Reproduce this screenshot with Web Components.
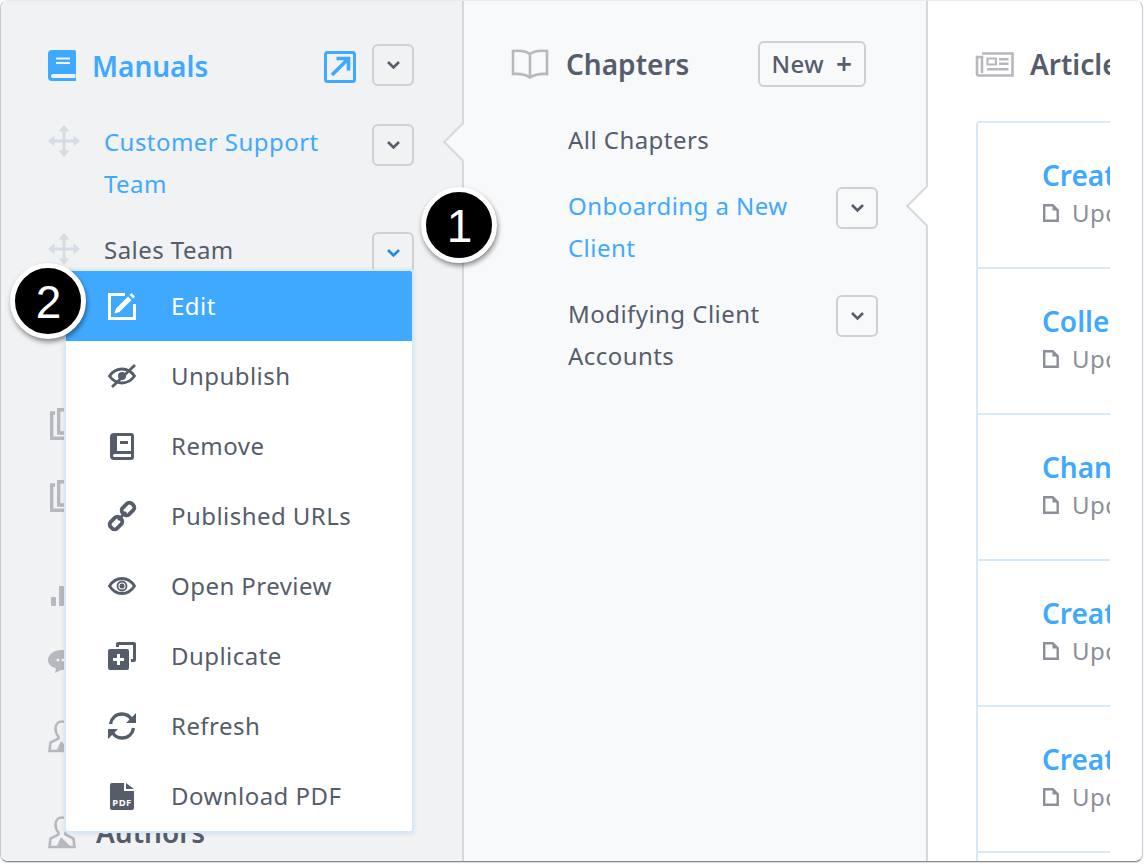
<!doctype html>
<html>
<head>
<meta charset="utf-8">
<title>Manuals</title>
<style>
  html, body { margin: 0; background: #fff; }
  body { font-family: "Noto Sans", "Open Sans", sans-serif; color: #555d6b; }
</style>
</head>
<body>
<app-window>
  <manuals-panel slot="left"></manuals-panel>
  <chapters-panel slot="middle"></chapters-panel>
  <articles-panel slot="right"></articles-panel>
</app-window>

<script>
const ICONS = {
  book: `<svg width="28" height="31" viewBox="0 0 28 31"><path fill="currentColor" d="M4 0h22a2 2 0 0 1 2 2v29H4a4 4 0 0 1-4-4V4a4 4 0 0 1 4-4z"/><path fill="#f0f2f4" d="M8 7.500h14v2H8zM8 12h14v2H8zM5 24h22.500v4H5a2 2 0 0 1 0-4z"/></svg>`,
  external: `<svg width="32" height="32" viewBox="0 0 32 32" fill="none" stroke="currentColor"><rect x="1.500" y="1.500" width="29" height="29" rx="2" stroke-width="3"/><path stroke-width="3.600" d="M8 24 24 8M12.500 7.500h12v12"/></svg>`,
  chevron: `<svg width="13" height="8" viewBox="0 0 13 8" fill="none" stroke="currentColor" stroke-width="2.600"><path d="M1 1l5.500 5.500L12 1"/></svg>`,
  move: `<svg width="32" height="32" viewBox="0 0 32 32" fill="currentColor"><path d="M14.500 5h3v9.500H27v3h-9.500V27h-3v-9.500H5v-3h9.500z"/><path d="M16 0l5.500 6.500h-11zM16 32l-5.500-6.500h11zM0 16l6.500-5.500v11zM32 16l-6.500 5.500v-11z"/></svg>`,
  edit: `<svg width="28" height="28" viewBox="0 0 28 28" fill="none" stroke="currentColor"><path stroke-width="3" d="M17 2.500H1.500v24H26.500V12"/><path fill="currentColor" stroke="none" d="M6.500 21.500l1.500-5L20 4.500l3.500 3.500L11.500 20zM21.500 3l2-2 3.500 3.500-2 2z"/></svg>`,
  eyeslash: `<svg width="28" height="24" viewBox="0 0 28 24" fill="none" stroke="currentColor" stroke-width="2.800"><path d="M1.500 12C5 7 9 5 14 5s9 2 12.500 7C23 17 19 19 14 19S5 17 1.500 12z"/><circle cx="14" cy="12" r="4" fill="currentColor" stroke="none"/><path d="M4 23 27 1"/></svg>`,
  remove: `<svg width="24" height="27" viewBox="0 0 24 27"><path fill="currentColor" fill-rule="evenodd" d="M4 0h17a3 3 0 0 1 3 3v21a3 3 0 0 1-3 3H4a4 4 0 0 1-4-4V4a4 4 0 0 1 4-4zM7 3v15h14V3zM4.500 21a1.500 1.500 0 0 0 0 3H21v-3z"/><path fill="currentColor" d="M10 8h8v3h-8z"/></svg>`,
  link: `<svg width="28" height="28" viewBox="0 0 28 28" fill="none" stroke="currentColor" stroke-width="3.800"><rect x="13.500" y="2.500" width="13" height="9" rx="3.500" transform="rotate(-45 20 7)"/><rect x="1.500" y="16.500" width="13" height="9" rx="3.500" transform="rotate(-45 8 21)"/><path d="M10 18l8-8" stroke-width="3"/></svg>`,
  eye: `<svg width="28" height="18" viewBox="0 0 28 18" fill="none" stroke="currentColor" stroke-width="2.800"><path d="M1.500 9C5 3.500 9 1.500 14 1.500s9 2 12.500 7.500C23 14.500 19 16.500 14 16.500S5 14.500 1.500 9z"/><circle cx="14" cy="9" r="2.500" fill="currentColor" stroke="none"/><circle cx="14" cy="9" r="4.500" stroke-width="1.800"/></svg>`,
  duplicate: `<svg width="28" height="28" viewBox="0 0 28 28"><path fill="currentColor" d="M10 0h16a2 2 0 0 1 2 2v16a2 2 0 0 1-2 2h-3v-3H25V3H11v2H8V2a2 2 0 0 1 2-2z"/><path fill="currentColor" fill-rule="evenodd" d="M2 7h17a2 2 0 0 1 2 2v17a2 2 0 0 1-2 2H2a2 2 0 0 1-2-2V9a2 2 0 0 1 2-2zM9 12v4H5v3h4v4h3v-4h4v-3h-4v-4z"/></svg>`,
  refresh: `<svg width="28" height="28" viewBox="0 0 28 28" fill="none" stroke="currentColor" stroke-width="3.400"><path d="M2.500 12C3.500 6 8 2 14 2c4 0 7.500 2 9.500 5.500"/><path d="M25.500 16C24.500 22 20 26 14 26c-4 0-7.500-2-9.500-5.500"/><path fill="currentColor" stroke="none" d="M28 1v10H18zM0 27V17h10z"/></svg>`,
  pdf: `<svg width="24" height="27" viewBox="0 0 24 27"><path fill="currentColor" d="M2 0h12v8h10v17a2 2 0 0 1-2 2H2a2 2 0 0 1-2-2V2a2 2 0 0 1 2-2zM16 0l8 6h-8z"/><text x="12" y="22.500" text-anchor="middle" font-family="Noto Sans, sans-serif" font-weight="700" font-size="9.500" fill="#fff">PDF</text></svg>`,
  openbook: `<svg width="38" height="30" viewBox="0 0 38 30" fill="none" stroke="currentColor" stroke-width="2.600"><path d="M19 5C15 2 8 1.500 2 2v23c6-.5 12 0 17 3.500 5-3.500 11-4 17-3.500V2c-6-.5-13 0-17 3z"/><path d="M19 5v23"/></svg>`,
  news: `<svg width="38" height="25" viewBox="0 0 38 25"><path fill="none" stroke="currentColor" stroke-width="2.600" d="M6 1.500h30.500v22H3a2 2 0 0 1-2-2V5h5v16"/><path fill="none" stroke="currentColor" stroke-width="2.200" d="M11.500 6.500h8.500v6h-8.500z"/><path fill="currentColor" d="M23 6h9.500v2.500H23zM23 10.500h9.500V13H23zM11 16h21.500v2.500H11z"/></svg>`,
  doc: `<svg width="16" height="18" viewBox="0 0 16 18" fill="none" stroke="currentColor" stroke-width="2.400"><path d="M1.200 1.200h8.500l5 5v10.600H1.200z"/><path d="M9.500 1v5.500H15z" fill="currentColor" stroke="none"/></svg>`,
  copies: `<svg width="32" height="32" viewBox="0 0 32 32" fill="none" stroke="currentColor" stroke-width="3.400"><path d="M5 5H1.700v25.300H22V27"/><path d="M8.700 1.700H30V25H8.700z"/></svg>`,
  bars: `<svg width="32" height="20" viewBox="0 0 32 20" fill="currentColor"><rect x="1" y="11" width="5" height="9" rx="1"/><rect x="9" y="0" width="5" height="20" rx="1"/></svg>`,
  chat: `<svg width="32" height="23" viewBox="0 0 32 23"><path fill="currentColor" d="M14 0c7.500 0 14 4 14 10s-6.500 10-14 10h-1l-6 3 1-4.500C3 17 0 14 0 10 0 4 6.500 0 14 0z"/><circle cx="10" cy="10" r="1.500" fill="#f0f2f4"/><circle cx="15" cy="10" r="1.500" fill="#f0f2f4"/></svg>`,
  user: `<svg width="28" height="32" viewBox="0 0 28 32" fill="none" stroke="currentColor" stroke-width="2.600"><path d="M14 1.500c4 0 6.500 3 6.500 7 0 3-1 6-3 8v2l8 4 1 8.500H1.500l1-8.500 8-4v-2c-2-2-3-5-3-8 0-4 2.500-7 6.500-7z"/><path fill="currentColor" stroke="none" d="M13 21l9 9H9z"/></svg>`
};

// small icon element, picks the svg from ICONS by its name attribute
class UiIcon extends HTMLElement {
  connectedCallback() {
    if (this.shadowRoot) return;
    const shadow = this.attachShadow({ mode: "open" });
    shadow.innerHTML = `
      <style>
        :host { display: inline-flex; align-items: center; justify-content: center; flex: none; line-height: 0; }
        svg { display: block; overflow: visible; }
      </style>
      ${ICONS[this.getAttribute("name")] || ""}`;
  }
}
customElements.define("ui-icon", UiIcon);

class DropBtn extends HTMLElement {
  constructor() {
    super();
    const shadow = this.attachShadow({ mode: "open" });
    shadow.innerHTML = `
      <style>
        :host {
          display: flex; flex: none; align-items: center; justify-content: center;
          box-sizing: border-box; width: 42px; height: 42px;
          border: 2px solid #cdd0d5; border-radius: 6px; color: #555d6b;
        }
        :host([active]) { color: #1c8ae6; }
      </style>
      <ui-icon name="chevron"></ui-icon>`;
  }
}
customElements.define("drop-btn", DropBtn);

// list row: icon column is optional, text wraps, chevron button at the right
class NavRow extends HTMLElement {
  constructor() {
    super();
    const shadow = this.attachShadow({ mode: "open" });
    shadow.innerHTML = `
      <style>
        :host {
          display: flex; position: relative; align-items: flex-start;
          font-size: 24px; line-height: 42px; letter-spacing: .45px; color: #555d6b;
        }
        :host([current]) { color: #3fa9ff; }
        .grip { width: 56px; flex: none; padding-top: 4px; line-height: 0; color: #d5dce4; }
        .text { flex: 1; max-width: 240px; }
        .btn { margin-left: auto; margin-top: var(--btn-top, 3px); }
        .notch {
          position: absolute; top: 6px; width: 30px; height: 30px; box-sizing: border-box;
          border-left: 2px solid #d4d9e0; border-bottom: 2px solid #d4d9e0;
          transform: rotate(45deg);
        }
      </style>
      <div class="grip" part="grip"><slot name="grip"></slot></div>
      <div class="text"><slot></slot></div>
      <div class="btn"><slot name="btn"></slot></div>
      <div class="notch" part="notch"></div>`;
    this.grip = shadow.querySelector(".grip");
    this.notch = shadow.querySelector(".notch");
  }
  connectedCallback() {
    if (!this.hasAttribute("grip")) this.grip.style.display = "none";
    if (this.hasAttribute("notch-at")) {
      this.notch.style.left = this.getAttribute("notch-at") + "px";
      this.notch.style.background = this.getAttribute("notch-fill");
    } else {
      this.notch.style.display = "none";
    }
  }
}
customElements.define("nav-row", NavRow);

class MenuItem extends HTMLElement {
  constructor() {
    super();
    const shadow = this.attachShadow({ mode: "open" });
    shadow.innerHTML = `
      <style>
        :host {
          display: flex; align-items: center; height: 70px; padding-left: 42px;
          font-size: 24px; letter-spacing: .45px; color: #555d6b;
        }
        :host([active]) { background: #3fa9ff; color: #fff; }
        .ico { width: 28px; display: flex; justify-content: center; margin-right: 35px; }
        .label { padding-bottom: 2px; }
      </style>
      <div class="ico"><slot name="icon"></slot></div>
      <div class="label"><slot></slot></div>`;
  }
}
customElements.define("menu-item", MenuItem);

class DropMenu extends HTMLElement {
  constructor() {
    super();
    const shadow = this.attachShadow({ mode: "open" });
    shadow.innerHTML = `
      <style>
        :host {
          display: block; position: absolute; left: 63px; top: 268px; width: 350px;
          box-sizing: border-box; background: #fff; overflow: hidden;
          border: 2px solid #d6e9f8; border-radius: 4px;
          box-shadow: 0 1px 4px rgba(60, 90, 120, .12); z-index: 3;
        }
      </style>
      <slot></slot>`;
  }
}
customElements.define("drop-menu", DropMenu);

class StepBadge extends HTMLElement {
  constructor() {
    super();
    const shadow = this.attachShadow({ mode: "open" });
    shadow.innerHTML = `
      <style>
        :host {
          display: flex; position: absolute; width: 76px; height: 76px; box-sizing: border-box;
          align-items: center; justify-content: center; z-index: 5;
          background: #000; border: 5px solid #fff; border-radius: 50%;
          box-shadow: 1px 3px 5px rgba(0, 0, 0, .45);
          font: 46px/1 "Liberation Sans", sans-serif; color: #fff;
        }
        span { margin: 1px 0 0 1px; }
      </style>
      <span><slot></slot></span>`;
  }
}
customElements.define("step-badge", StepBadge);

class ManualsPanel extends HTMLElement {
  constructor() {
    super();
    const shadow = this.attachShadow({ mode: "open" });
    shadow.innerHTML = `
      <style>
        :host {
          display: block; position: relative; box-sizing: border-box; width: 463px; height: 100%;
          padding: 43px 48px 0 47px; background: #f0f2f4; border-right: 2px solid #d4d9e0;
        }
        .head { display: flex; align-items: center; height: 42px; color: #3fa9ff; }
        .head .title { font-size: 28px; font-weight: 600; margin-left: 16px; padding-top: 1px; }
        .head .ext { margin-left: auto; margin-right: 16px; padding-top: 3px; }
        .head drop-btn { color: #555d6b; }
        .rows { margin-top: 35px; display: flex; flex-direction: column; gap: 24px; }
        .side { display: flex; flex-direction: column; align-items: flex-start; color: #b6b8be; }
        .authors { display: flex; align-items: center; margin-top: 60px; color: #b6b8be; }
        .authors span { margin-left: 20px; font-size: 28px; font-weight: 600; color: #555d6b; margin-top: 1px; }
      </style>
      <div class="head">
        <ui-icon name="book"></ui-icon>
        <span class="title">Manuals</span>
        <ui-icon class="ext" name="external"></ui-icon>
        <drop-btn></drop-btn>
      </div>
      <div class="rows">
        <nav-row grip current notch-at="401" notch-fill="#f8f9fb">
          <ui-icon slot="grip" name="move"></ui-icon>
          Customer Support Team
          <drop-btn slot="btn"></drop-btn>
        </nav-row>
        <nav-row grip>
          <ui-icon slot="grip" name="move"></ui-icon>
          Sales Team
          <drop-btn slot="btn" active></drop-btn>
        </nav-row>
      </div>
      <div class="side">
        <ui-icon name="copies" style="margin-top:134px;margin-left:2px"></ui-icon>
        <ui-icon name="copies" style="margin-top:40px;margin-left:2px"></ui-icon>
        <ui-icon name="bars" style="margin-top:74px;margin-left:2px"></ui-icon>
        <ui-icon name="chat" style="margin-top:44px"></ui-icon>
        <ui-icon name="user" style="margin-top:47px"></ui-icon>
      </div>
      <div class="authors">
        <ui-icon name="user"></ui-icon>
        <span>Authors</span>
      </div>
      <drop-menu>
        <menu-item active><ui-icon slot="icon" name="edit"></ui-icon>Edit</menu-item>
        <menu-item><ui-icon slot="icon" name="eyeslash"></ui-icon>Unpublish</menu-item>
        <menu-item><ui-icon slot="icon" name="remove"></ui-icon>Remove</menu-item>
        <menu-item><ui-icon slot="icon" name="link"></ui-icon>Published URLs</menu-item>
        <menu-item><ui-icon slot="icon" name="eye"></ui-icon>Open Preview</menu-item>
        <menu-item><ui-icon slot="icon" name="duplicate"></ui-icon>Duplicate</menu-item>
        <menu-item><ui-icon slot="icon" name="refresh"></ui-icon>Refresh</menu-item>
        <menu-item><ui-icon slot="icon" name="pdf"></ui-icon>Download PDF</menu-item>
      </drop-menu>`;
  }
}
customElements.define("manuals-panel", ManualsPanel);

class ChaptersPanel extends HTMLElement {
  constructor() {
    super();
    const shadow = this.attachShadow({ mode: "open" });
    shadow.innerHTML = `
      <style>
        :host {
          display: block; position: relative; box-sizing: border-box; width: 464px; height: 100%;
          padding: 40px 48px 0 47px; background: #f8f9fb; border-right: 2px solid #d4d9e0;
          --btn-top: 2px;
        }
        .head { display: flex; align-items: center; height: 46px; }
        .head ui-icon { color: #b6b8be; }
        .title { font-size: 28px; font-weight: 600; margin-left: 17px; margin-top: -1px; }
        .new {
          display: flex; align-items: center; justify-content: center; gap: 12px;
          box-sizing: border-box; width: 108px; height: 46px; margin: 0 12px 0 auto; padding-bottom: 2px;
          border: 2px solid #cdd0d5; border-radius: 6px; font-size: 24px; font-weight: 500; letter-spacing: .45px;
        }
        .new .plus { font-size: 28px; font-weight: 600; line-height: 1; }
        .rows { margin: 32px 0 0 57px; display: flex; flex-direction: column; gap: 24px; }
      </style>
      <div class="head">
        <ui-icon name="openbook"></ui-icon>
        <span class="title">Chapters</span>
        <div class="new"><span>New</span><span class="plus">+</span></div>
      </div>
      <div class="rows">
        <nav-row>All Chapters</nav-row>
        <nav-row current notch-at="344" notch-fill="#fff">
          Onboarding a New Client
          <drop-btn slot="btn"></drop-btn>
        </nav-row>
        <nav-row>
          Modifying Client Accounts
          <drop-btn slot="btn"></drop-btn>
        </nav-row>
      </div>`;
  }
}
customElements.define("chapters-panel", ChaptersPanel);

class ArticleCard extends HTMLElement {
  constructor() {
    super();
    const shadow = this.attachShadow({ mode: "open" });
    shadow.innerHTML = `
      <style>
        :host {
          display: block; box-sizing: border-box; height: 146px; padding: 33px 0 0 64px;
          border-top: 2px solid #d6e9f8; white-space: nowrap;
        }
        .title { font-size: 28px; font-weight: 600; line-height: 38px; color: #3fa9ff; }
        .sub { display: flex; align-items: center; gap: 13px; margin-left: 1px; font-size: 24px; letter-spacing: .45px; line-height: 38px; color: #8b8f98; }
      </style>
      <div class="title"><slot></slot></div>
      <div class="sub"><ui-icon name="doc"></ui-icon><span>Updated</span></div>`;
  }
}
customElements.define("article-card", ArticleCard);

class ArticlesPanel extends HTMLElement {
  constructor() {
    super();
    const shadow = this.attachShadow({ mode: "open" });
    shadow.innerHTML = `
      <style>
        :host {
          display: block; box-sizing: border-box; flex: 1; height: 100%; overflow: hidden;
          margin-right: 32px; padding: 40px 0 0 48px; background: #fff; white-space: nowrap;
        }
        .head { display: flex; align-items: center; height: 46px; }
        .head ui-icon { color: #b6b8be; }
        .title { font-size: 28px; font-weight: 600; margin-left: 16px; margin-top: -1px; }
        .list { margin-top: 34px; border-left: 2px solid #d6e9f8; border-top-left-radius: 4px; }
      </style>
      <div class="head">
        <ui-icon name="news"></ui-icon>
        <span class="title">Articles</span>
      </div>
      <div class="list">
        <article-card>Create</article-card>
        <article-card>Collect</article-card>
        <article-card>Change</article-card>
        <article-card>Create</article-card>
        <article-card>Create</article-card>
        <article-card></article-card>
      </div>`;
  }
}
customElements.define("articles-panel", ArticlesPanel);

class AppWindow extends HTMLElement {
  constructor() {
    super();
    const shadow = this.attachShadow({ mode: "open" });
    shadow.innerHTML = `
      <style>
        :host { display: block; position: relative; width: 1144px; height: 864px; }
        .frame {
          display: flex; box-sizing: border-box; width: 1143px; height: 862px; overflow: hidden;
          background: #fff; border: 1px solid #c8c9cc; border-top-color: #e9eaec;
          border-bottom-color: #8a8a8a; border-radius: 8px;
          box-shadow: 0 1px 1px rgba(0, 0, 0, .15);
        }
        .one { left: 421px; top: 187px; }
        .two { left: 10px; top: 263px; }
      </style>
      <div class="frame">
        <slot name="left"></slot>
        <slot name="middle"></slot>
        <slot name="right"></slot>
      </div>
      <step-badge class="one">1</step-badge>
      <step-badge class="two">2</step-badge>`;
  }
}
customElements.define("app-window", AppWindow);
</script>
</body>
</html>
